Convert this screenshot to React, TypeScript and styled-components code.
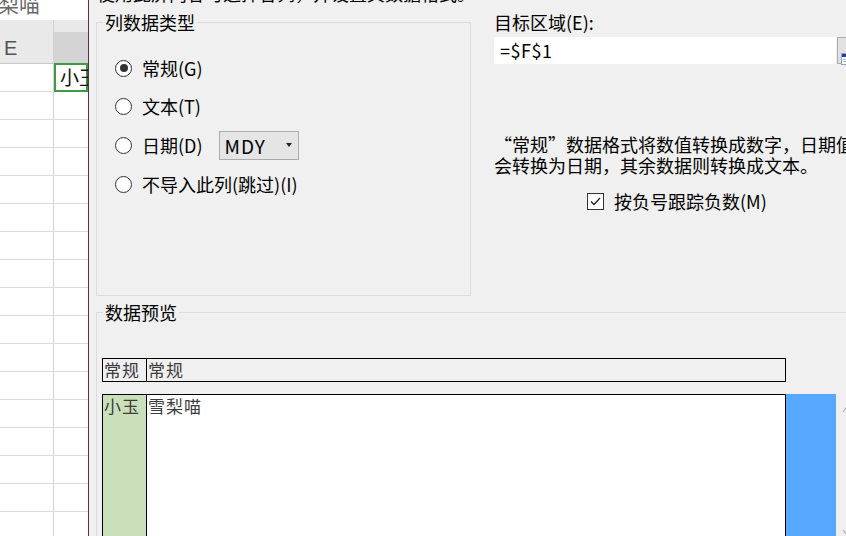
import React from "react";
import styled, { createGlobalStyle } from "styled-components";

const GlobalStyle = createGlobalStyle`
  html, body {
    margin: 0;
    padding: 0;
    overflow: hidden;
    background: #ffffff;
  }
  * {
    box-sizing: border-box;
  }
`;

const UI_FONT = `"Noto Sans CJK SC", "Noto Sans", sans-serif`;

const Screen = styled.div`
  display: flex;
  width: 846px;
  height: 536px;
  overflow: hidden;
  font-family: ${UI_FONT};
`;

/* ---------- spreadsheet behind the dialog ---------- */

const Sheet = styled.div`
  width: 88px;
  flex: none;
  display: flex;
  flex-direction: column;
  background: #ffffff;
  overflow: hidden;
`;

const FormulaBar = styled.div`
  height: 20px;
  flex: none;
  overflow: hidden;
  white-space: nowrap;
  .formula-text {
    margin: -9px 0 0 -23px;
    font-size: 21px;
    line-height: 24px;
    color: #6a6a6a;
  }
`;

const HeaderRow = styled.div`
  display: flex;
  height: 44px;
  flex: none;
  background: #e9e9e9;
  border-bottom: 1px solid #c9c9c9;
`;

const HeaderCell = styled.div<{ $active?: boolean }>`
  width: ${(p) => (p.$active ? "auto" : "54px")};
  flex: ${(p) => (p.$active ? "1" : "none")};
  margin-top: ${(p) => (p.$active ? "12px" : "0")};
  background: ${(p) => (p.$active ? "#d4d4d4" : "#e9e9e9")};
  border-right: ${(p) => (p.$active ? "none" : "1px solid #d2d2d2")};
  padding: 18px 0 0 4px;
  font-family: "Liberation Sans", Arial, sans-serif;
  font-size: 20px;
  line-height: 20px;
  color: #555555;
`;

const SheetRow = styled.div`
  display: flex;
  height: 28px;
  flex: none;
  border-bottom: 1px solid #dadada;
`;

const SheetCell = styled.div<{ $selected?: boolean; $first?: boolean }>`
  width: ${(p) => (p.$first ? "54px" : "auto")};
  flex: ${(p) => (p.$first ? "none" : "1")};
  border-right: ${(p) => (p.$first ? "1px solid #d4d4d4" : "none")};
  margin-top: ${(p) => (p.$selected ? "-1px" : "0")};
  height: ${(p) => (p.$selected ? "29px" : "auto")};
  box-shadow: ${(p) => (p.$selected ? "inset 0 0 0 2px #3f9a43" : "none")};
  padding-left: 6px;
  font-size: 19px;
  line-height: 28px;
  color: #111111;
  white-space: nowrap;
  overflow: hidden;
`;

/* ---------- dialog ---------- */

const Dialog = styled.div`
  flex: 1;
  min-width: 0;
  display: flex;
  flex-direction: column;
  background: #f0f0f0;
  border-left: 1px solid #5c2c4e;
  padding-left: 7px;
  color: #000000;
  font-size: 18px;
  overflow: hidden;
`;

const Caption = styled.div`
  margin-top: -17px;
  padding-left: 1px;
  line-height: 20px;
  white-space: nowrap;
`;

const TopRow = styled.div`
  display: flex;
  margin-top: 9px;
  flex: none;
`;

const Group = styled.fieldset<{ $width: number; $height: number }>`
  margin: 0;
  padding: 0;
  min-width: 0;
  flex: none;
  width: ${(p) => p.$width}px;
  height: ${(p) => p.$height}px;
  border: 1px solid #dcdcdc;
`;

const Legend = styled.legend`
  margin-left: 6px;
  padding: 0 2px;
  font-size: 18px;
  line-height: 20px;
`;

const RadioList = styled.div`
  display: flex;
  flex-direction: column;
  padding: 17px 0 0 18px;
`;

const RadioRow = styled.div<{ $tall?: boolean }>`
  display: flex;
  align-items: center;
  height: ${(p) => (p.$tall ? 40 : 38)}px;
`;

const RadioCircle = styled.span<{ $checked?: boolean }>`
  width: 17px;
  height: 17px;
  flex: none;
  border: 1px solid #333333;
  border-radius: 50%;
  background: #ffffff;
  display: flex;
  align-items: center;
  justify-content: center;
  &::after {
    content: "";
    display: ${(p) => (p.$checked ? "block" : "none")};
    width: 8px;
    height: 8px;
    border-radius: 50%;
    background: #333333;
  }
`;

const OptionLabel = styled.span`
  margin-left: 10px;
  line-height: 20px;
  white-space: nowrap;
`;

const Dropdown = styled.div`
  display: flex;
  align-items: center;
  margin-left: 16px;
  width: 80px;
  height: 29px;
  padding-left: 5px;
  background: #e5e5e5;
  border: 1px solid #acacac;
  font-size: 19px;
  letter-spacing: 1px;
  .caret {
    margin: 0 6px 0 auto;
    border-left: 3px solid transparent;
    border-right: 3px solid transparent;
    border-top: 4px solid #222222;
  }
`;

const RightPane = styled.div`
  display: flex;
  flex-direction: column;
  margin-left: 23px;
  width: 440px;
  flex: none;
`;

const FieldLabel = styled.div`
  line-height: 20px;
`;

const InputRow = styled.div`
  display: flex;
  margin-top: 5px;
  height: 27px;
`;

const TextInput = styled.div`
  width: 342px;
  height: 27px;
  background: #ffffff;
  padding-left: 6px;
  font-size: 18px;
  line-height: 27px;
  letter-spacing: 0.5px;
`;

const CollapseButton = styled.div`
  width: 24px;
  height: 27px;
  margin-left: 1px;
  flex: none;
  background: #e1e1e1;
  border: 1px solid #adadad;
  padding: 6px 0 0 3px;
`;

const Description = styled.div`
  margin-top: 70px;
  line-height: 21px;
  white-space: nowrap;
`;

const CheckRow = styled.div`
  display: flex;
  align-items: center;
  margin: 15px 0 0 93px;
  height: 20px;
`;

const CheckBox = styled.span`
  width: 17px;
  height: 17px;
  flex: none;
  border: 1px solid #333333;
  background: #ffffff;
  display: flex;
  align-items: center;
  justify-content: center;
`;

const PreviewBody = styled.div`
  padding: 36px 0 0 5px;
`;

const PreviewHeader = styled.div`
  display: flex;
  width: 684px;
  height: 24px;
  border: 1px solid #000000;
  background: #f0f0f0;
`;

const PreviewCell = styled.div<{ $first?: boolean; $tint?: string }>`
  width: ${(p) => (p.$first ? "44px" : "auto")};
  flex: ${(p) => (p.$first ? "none" : "1")};
  border-right: ${(p) => (p.$first ? "1px solid #000000" : "none")};
  background: ${(p) => p.$tint || "transparent"};
  padding: 1px 0 0 1px;
  font-size: 17px;
  line-height: 20px;
  letter-spacing: 1px;
  color: #3c3c3c;
  white-space: nowrap;
`;

const PreviewData = styled.div`
  display: flex;
  margin-top: 12px;
  height: 170px;
`;

const DataTable = styled.div`
  display: flex;
  width: 684px;
  flex: none;
  border: 1px solid #000000;
  border-bottom: none;
  background: #ffffff;
`;

const SelectedColumn = styled.div`
  width: 50px;
  flex: none;
  background: #56a9ff;
`;

const ScrollArrows = styled.div`
  display: flex;
  flex-direction: column;
  justify-content: space-between;
  width: 8px;
  height: 130px;
  margin: 12px 0 0 6px;
`;

const Chevron = ({ down }: { down?: boolean }) => (
  <svg width="8" height="8" viewBox="0 0 8 8">
    <path
      d={down ? "M1 2 L4 6 L7 2" : "M1 6 L4 2 L7 6"}
      fill="none"
      stroke="#b4b4b4"
      strokeWidth="1.2"
    />
  </svg>
);

const App = () => {
  const options = [
    { label: "常规(G)", checked: true },
    { label: "文本(T)" },
    { label: "日期(D)", date: true },
    { label: "不导入此列(跳过)(I)" },
  ];

  return (
    <>
      <GlobalStyle />
      <Screen>
        <Sheet>
          <FormulaBar>
            <div className="formula-text">雪梨喵</div>
          </FormulaBar>
          <HeaderRow>
            <HeaderCell>E</HeaderCell>
            <HeaderCell $active />
          </HeaderRow>
          {Array.from({ length: 17 }).map((_, i) => (
            <SheetRow key={i}>
              <SheetCell $first />
              <SheetCell $selected={i === 0}>{i === 0 ? "小玉" : ""}</SheetCell>
            </SheetRow>
          ))}
        </Sheet>

        <Dialog>
          <Caption>使用此屏内容可选择各列，并设置其数据格式。</Caption>
          <TopRow>
            <Group $width={375} $height={284}>
              <Legend>列数据类型</Legend>
              <RadioList>
                {options.map((o) => (
                  <RadioRow key={o.label} $tall={o.date}>
                    <RadioCircle $checked={o.checked} />
                    <OptionLabel>{o.label}</OptionLabel>
                    {o.date && (
                      <Dropdown>
                        MDY
                        <span className="caret" />
                      </Dropdown>
                    )}
                  </RadioRow>
                ))}
              </RadioList>
            </Group>

            <RightPane>
              <FieldLabel>目标区域(E):</FieldLabel>
              <InputRow>
                <TextInput>=$F$1</TextInput>
                <CollapseButton>
                  <svg width="14" height="12" viewBox="0 0 14 12">
                    <rect x="0.5" y="0.5" width="13" height="11" fill="#ffffff" stroke="#8aa4c8" />
                    <rect x="1" y="1" width="12" height="3" fill="#2b3f8c" />
                    <rect x="2" y="6" width="9" height="1" fill="#9cc4e8" />
                    <rect x="2" y="8" width="9" height="1" fill="#9cc4e8" />
                  </svg>
                </CollapseButton>
              </InputRow>
              <Description>
                “常规”数据格式将数值转换成数字，日期值
                <br />
                会转换为日期，其余数据则转换成文本。
              </Description>
              <CheckRow>
                <CheckBox>
                  <svg width="11" height="9" viewBox="0 0 11 9">
                    <path d="M1 4.5 L4 7.5 L10 1" fill="none" stroke="#222222" strokeWidth="1.3" />
                  </svg>
                </CheckBox>
                <OptionLabel>按负号跟踪负数(M)</OptionLabel>
              </CheckRow>
            </RightPane>
          </TopRow>

          <Group $width={800} $height={300} style={{ marginTop: 6 }}>
            <Legend>数据预览</Legend>
            <PreviewBody>
              <PreviewHeader>
                <PreviewCell $first>常规</PreviewCell>
                <PreviewCell>常规</PreviewCell>
              </PreviewHeader>
              <PreviewData>
                <DataTable>
                  <PreviewCell $first $tint="#c9e0bb">
                    小玉
                  </PreviewCell>
                  <PreviewCell>雪梨喵</PreviewCell>
                </DataTable>
                <SelectedColumn />
                <ScrollArrows>
                  <Chevron />
                  <Chevron down />
                </ScrollArrows>
              </PreviewData>
            </PreviewBody>
          </Group>
        </Dialog>
      </Screen>
    </>
  );
};

export default App;
